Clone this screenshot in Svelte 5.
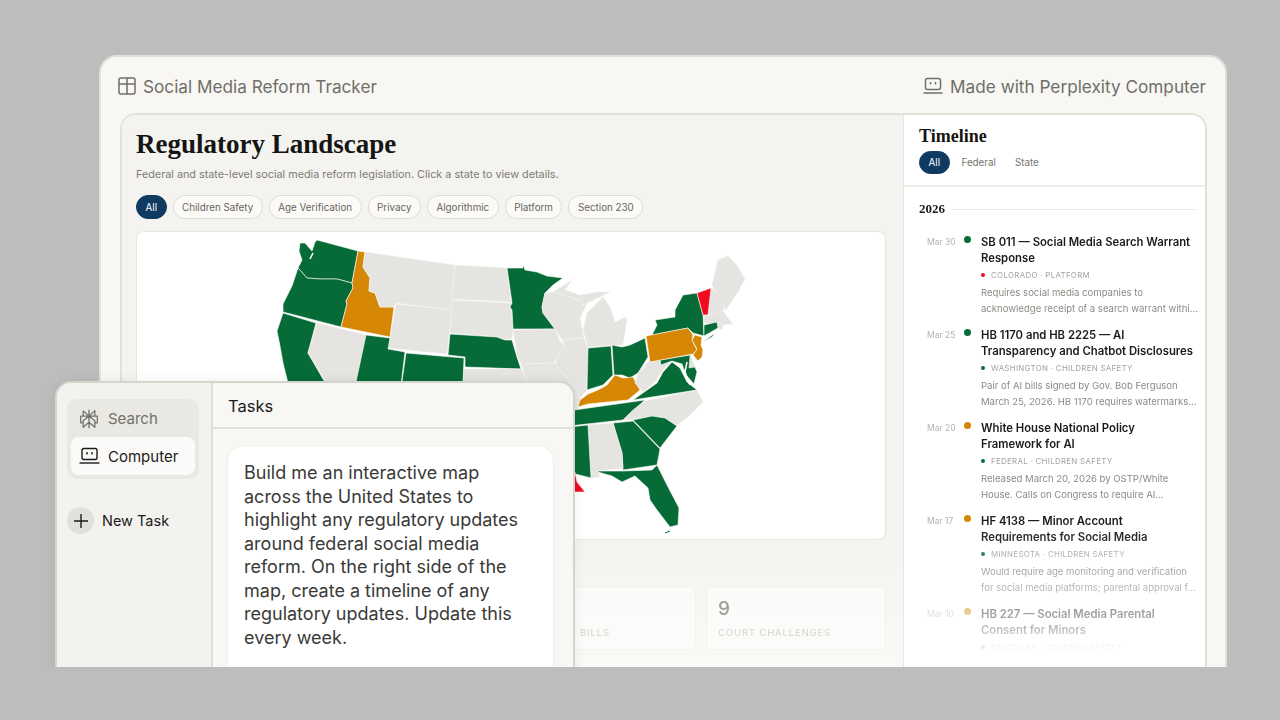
<script>
  const GREEN = '#066b37';
  const ORANGE = '#d58705';
  const RED = '#f20a1f';
  const GRAY = '#e5e4e0';

  // outlines in page-like coordinates, viewBox of the svg is offset to match
  const states = [
    { id: 'WA', fill: GREEN, points: '300,243 305,243 312,251 315,242 317,240 358,251 352,283 337,279 320,279 307,278 298,268 302,260 299,251' },
    { id: 'OR', fill: GREEN, points: '298,268 307,278 320,279 337,279 352,283 353,288 346,301 347,304 341,327 283,312 283,304 292,286' },
    { id: 'CA', fill: GREEN, points: '283,313 316,323 308,353 323,379 345,410 345,470 300,440 287,379 283,363 280,346 277,331' },
    { id: 'ID', fill: ORANGE, points: '358,251 365,252 363,267 370,278 369,291 375,293 380,307 394,307 390,337 341,327 347,304 346,301 353,288 352,283' },
    { id: 'MT', fill: GRAY, points: '365,252 455,265 452,310 396,303 394,307 380,307 375,293 369,291 370,278 363,267' },
    { id: 'ND', fill: GRAY, points: '455,265 507,268 511,302 452,299' },
    { id: 'SD', fill: GRAY, points: '452,300 511,303 513,329 512,338 505,340 497,337 450,333' },
    { id: 'MN', fill: GREEN, points: '507,268 523,268 523,264 525,270 537,272 547,276 563,278 553,285 545,293 542,307 543,313 555,329 513,329 512,310 510,307 512,303' },
    { id: 'WY', fill: GRAY, points: '396,304 452,310 447,354 388,348' },
    { id: 'NV', fill: GRAY, points: '317,323 366,335 350,420 308,353' },
    { id: 'UT', fill: GREEN, points: '366,335 390,338 388,349 405,352 398,410 350,410' },
    { id: 'CO', fill: GREEN, points: '406,353 464,358 462,410 398,410' },
    { id: 'NE', fill: GREEN, points: '450,334 497,337 505,340 512,340 517,357 521,369 465,367 465,357 448,355' },
    { id: 'KS', fill: GRAY, points: '464,369 521,369 526,378 530,412 462,412' },
    { id: 'IA', fill: GRAY, points: '513,330 555,329 559,339 565,347 558,357 554,363 521,364 517,355' },
    { id: 'MO', fill: GRAY, points: '521,364 554,363 575,387 580,398 578,412 530,412 526,378' },
    { id: 'WI', fill: GRAY, points: '545,293 553,292 580,300 583,305 587,303 580,318 584,338 562,340 555,329 543,313 542,307' },
    { id: 'MI-U', fill: GRAY, points: '553,292 572,280 565,290 580,295 597,292 610,292 600,297 587,303 583,305 580,300' },
    { id: 'MI', fill: GRAY, points: '588,347 583,330 587,313 595,305 603,297 610,307 615,322 625,317 627,320 623,345' },
    { id: 'IL', fill: GRAY, points: '562,340 584,338 588,348 589,378 587,390 580,398 575,387 555,364 558,357 565,347' },
    { id: 'IN', fill: GREEN, points: '588,348 611,346 613,375 603,385 587,390' },
    { id: 'OH', fill: GREEN, points: '612,345 622,347 630,345 645,338 648,357 638,373 630,378 622,375 614,375' },
    { id: 'KY', fill: ORANGE, points: '578,407 580,400 588,394 598,390 607,385 615,375 623,378 633,377 636,383 640,390 628,400 588,404' },
    { id: 'TN', fill: GREEN, points: '560,412 645,400 623,420 560,427' },
    { id: 'WV', fill: GRAY, points: '648,362 660,358 661,365 670,362 663,370 655,382 643,392 635,383 638,373' },
    { id: 'VA', fill: GREEN, points: '633,400 640,395 657,383 663,372 672,362 680,368 687,382 697,390' },
    { id: 'MD', fill: GREEN, points: '660,360 690,355 697,372 694,384 686,375 682,364 672,361 661,365' },
    { id: 'DE', fill: GRAY, points: '690,356 695,367 689,368' },
    { id: 'NC', fill: GRAY, points: '623,420 633,410 645,401 697,390 703,402 687,418 677,425 665,418 652,416 633,420' },
    { id: 'SC', fill: GREEN, points: '633,420 652,416 665,418 677,426 660,448' },
    { id: 'GA', fill: GREEN, points: '613,423 633,421 660,449 657,465 623,470 622,453' },
    { id: 'AL', fill: GRAY, points: '588,425 613,423 622,453 623,468 598,471 600,477 591,478' },
    { id: 'MS', fill: GREEN, points: '560,428 588,425 591,478 560,470' },
    { id: 'FL', fill: GREEN, points: '598,471 623,471 652,470 657,465 667,485 679,508 678,525 670,527 657,510 650,500 648,488 635,476 622,482 612,476 598,472' },
    { id: 'LA', fill: RED, points: '560,472 575,472 577,482 585,492 560,492' },
    { id: 'NY', fill: GREEN, points: '697,293 703,315 704,336 693,333 688,328 652,335 657,325 655,320 675,317 675,310 683,295' },
    { id: 'NH', fill: GRAY, points: '711,287 725,300 723,312 708,315' },
    { id: 'VT', fill: RED, points: '697,293 711,288 708,315 703,315' },
    { id: 'ME', fill: GRAY, points: '712,285 718,260 728,256 736,264 745,279 738,292 726,310' },
    { id: 'MA', fill: GRAY, points: '704,316 723,311 728,318 733,324 723,325 704,323' },
    { id: 'RI', fill: GRAY, points: '718,322 723,325 722,330 718,328' },
    { id: 'CT', fill: GREEN, points: '704,325 717,322 718,328 704,336' },
    { id: 'LI', fill: GREEN, points: '703,342 715,333 712,337' },
    { id: 'PA', fill: ORANGE, points: '646,336 688,328 693,335 692,340 697,350 693,354 650,362' },
    { id: 'NJ', fill: ORANGE, points: '695,335 702,337 701,345 703,350 702,357 698,361 693,355 697,349 692,340' }
  ];

  const filters = ['All', 'Children Safety', 'Age Verification', 'Privacy', 'Algorithmic', 'Platform', 'Section 230'];

  const events = [
    { date: 'Mar 30', dot: GREEN, title: 'SB 011 — Social Media Search Warrant Response', tag: RED, meta: 'Colorado · Platform', desc: 'Requires social media companies to acknowledge receipt of a search warrant withi...' },
    { date: 'Mar 25', dot: GREEN, title: 'HB 1170 and HB 2225 — AI Transparency and Chatbot Disclosures', tag: GREEN, meta: 'Washington · Children Safety', desc: 'Pair of AI bills signed by Gov. Bob Ferguson March 25, 2026. HB 1170 requires watermarks...' },
    { date: 'Mar 20', dot: ORANGE, title: 'White House National Policy Framework for AI', tag: GREEN, meta: 'Federal · Children Safety', desc: 'Released March 20, 2026 by OSTP/White House. Calls on Congress to require AI...' },
    { date: 'Mar 17', dot: ORANGE, title: 'HF 4138 — Minor Account Requirements for Social Media', tag: GREEN, meta: 'Minnesota · Children Safety', desc: 'Would require age monitoring and verification for social media platforms; parental approval f...' },
    { date: 'Mar 10', dot: ORANGE, title: 'HB 227 — Social Media Parental Consent for Minors', tag: GREEN, meta: 'Kentucky · Children Safety', desc: '' }
  ];
</script>

<div class="page">
  <div class="stage">
    <div class="window">
      <header class="bar">
        <div class="bar-item">
          <svg width="18" height="18" viewBox="0 0 18 18" fill="none" stroke="currentColor" stroke-width="1.5">
            <rect x="1" y="1" width="16" height="16" rx="2" />
            <path d="M1 7h16M9 1v16" />
          </svg>
          Social Media Reform Tracker
        </div>
        <div class="bar-item">
          <svg width="20" height="18" viewBox="0 0 20 18" fill="none" stroke="currentColor" stroke-width="1.5">
            <rect x="2.5" y="1.5" width="15" height="11" rx="2" />
            <path d="M7.5 5v2.5M12.5 5v2.5" />
            <path d="M0.5 16h19" />
          </svg>
          Made with Perplexity Computer
        </div>
      </header>

      <div class="panel">
        <main class="main">
          <h1>Regulatory Landscape</h1>
          <p class="sub">Federal and state-level social media reform legislation. Click a state to view details.</p>
          <div class="chips">
            {#each filters as f, i}
              <span class="chip" class:on={i === 0}>{f}</span>
            {/each}
          </div>
          <div class="map">
            <svg width="748" height="307" viewBox="137 232 748 307">
              {#each states as s (s.id)}
                <polygon points={s.points} fill={s.fill} stroke={s.fill === GRAY ? '#f3f2ef' : '#fff'} stroke-width="0.6" stroke-linejoin="round" />
              {/each}
              <path d="M313 253l-3 6M687 362l-2 10 5 13" fill="none" stroke="#fff" stroke-width="1.5" />
              <path d="M665 533l5-2" fill="none" stroke={GREEN} stroke-width="1" />
            </svg>
          </div>
          <div class="stats">
            <div class="stat"></div>
            <div class="stat"></div>
            <div class="stat"><span class="bills">Bills</span></div>
            <div class="stat"><b>9</b><span>Court challenges</span></div>
          </div>
        </main>

        <aside class="side">
          <div class="side-head">
            <h2>Timeline</h2>
            <div class="tabs">
              <span class="chip on">All</span>
              <span class="tab">Federal</span>
              <span class="tab">State</span>
            </div>
          </div>
          <div class="side-body">
            <div class="year"><b>2026</b><i></i></div>
            {#each events as e}
              <article class="event">
                <time>{e.date}</time>
                <span class="dot" style="background:{e.dot}"></span>
                <div>
                  <h3>{e.title}</h3>
                  <div class="meta"><span class="tag" style="background:{e.tag}"></span>{e.meta}</div>
                  {#if e.desc}<p>{e.desc}</p>{/if}
                </div>
              </article>
            {/each}
          </div>
        </aside>
      </div>
    </div>

    <section class="tasks">
      <nav class="nav">
        <div class="switch">
          <div class="switch-item search">
            <svg width="20" height="22" viewBox="0 0 24 24" fill="none" stroke="currentColor" stroke-width="1.5" stroke-linejoin="round">
              <path d="M12 1v22M5 2l7 6.5L19 2v6.5M5 2v6.5M2 8.5h20v8h-3M2 8.5v8h3M5 22v-8l7-5.5 7 5.5v8l-7-6z" />
            </svg>
            Search
          </div>
          <div class="switch-item active">
            <svg width="21" height="18" viewBox="0 0 20 18" fill="none" stroke="currentColor" stroke-width="1.4">
              <rect x="2.5" y="1.5" width="15" height="11" rx="2" />
              <path d="M7.5 5v2.5M12.5 5v2.5" />
              <path d="M0 16h20" />
            </svg>
            Computer
          </div>
        </div>
        <div class="new">
          <span class="plus">
            <svg width="16" height="16" viewBox="0 0 16 16" fill="none" stroke="currentColor" stroke-width="1.4"><path d="M8 1v14M1 8h14" /></svg>
          </span>
          New Task
        </div>
      </nav>
      <div class="content">
        <div class="content-head">Tasks</div>
        <div class="prompt">
          Build me an interactive map across the United States to highlight any regulatory updates around federal social media reform. On the right side of the map, create a timeline of any regulatory updates. Update this every week.
        </div>
      </div>
    </section>
  </div>
</div>

<style>
  :global(body) {
    margin: 0;
    background: #bdbdbd;
  }

  .page {
    height: 720px;
    font-family: Inter, "Liberation Sans", sans-serif;
    color: #1b1b19;
  }

  .stage {
    position: relative;
    height: 667px;
    overflow: hidden;
    box-sizing: border-box;
    padding: 55px 53px 0 99px;
  }

  .window {
    height: 680px;
    box-sizing: border-box;
    background: #f8f7f3;
    border: 2px solid #e2e1d9;
    border-radius: 18px;
    padding: 0 18px 0 19px;
  }

  .bar {
    display: flex;
    justify-content: space-between;
    align-items: center;
    box-sizing: border-box;
    height: 56px;
    padding-top: 2px;
    margin: 0 1px 0 -2px;
    color: #6f6f69;
    font-size: 17.2px;
  }

  .bar-item {
    display: flex;
    align-items: center;
    gap: 7px;
  }

  .panel {
    display: flex;
    height: 620px;
    border: 2px solid #e2e1d9;
    border-bottom: 0;
    border-radius: 16px 16px 0 0;
    overflow: hidden;
  }

  .main {
    flex: 1;
    min-width: 0;
    box-sizing: border-box;
    padding: 11px 17px 0 14px;
    background: linear-gradient(#f4f3ef 420px, #faf9f6 540px);
  }

  h1 {
    margin: 0;
    font: 700 27px/36px "Liberation Serif", serif;
    color: #151513;
  }

  .sub {
    margin: 5px 0 0;
    font-size: 10.8px;
    line-height: 16px;
    color: #7c7c76;
  }

  .chips {
    display: flex;
    gap: 6px;
    margin-top: 12px;
  }

  .chip {
    display: inline-flex;
    align-items: center;
    box-sizing: border-box;
    height: 24px;
    padding: 0 8.5px;
    border: 1px solid #dcdbd4;
    border-radius: 12px;
    background: #fbfaf7;
    font-size: 9.8px;
    color: #65655f;
  }

  .chip.on {
    background: #0f3a62;
    border-color: #0f3a62;
    color: #fff;
  }

  .map {
    margin-top: 12px;
    height: 309px;
    box-sizing: border-box;
    background: #fff;
    border: 1px solid #e6e5de;
    border-radius: 8px;
    overflow: hidden;
  }

  .map svg {
    display: block;
  }

  .stats {
    display: grid;
    grid-template-columns: repeat(4, 1fr);
    gap: 10px;
    margin-top: 46px;
    opacity: 0.55;
  }

  .stat {
    height: 64px;
    box-sizing: border-box;
    padding: 10px 11px;
    background: #fff;
    border: 1px solid #efeee9;
    border-radius: 6px;
  }

  .stat b {
    display: block;
    font-size: 19px;
    line-height: 24px;
    font-weight: 500;
    color: #55554f;
  }

  .stat span {
    display: block;
    margin-top: 6px;
    font-size: 9.6px;
    letter-spacing: 0.8px;
    text-transform: uppercase;
    color: #b5b5b0;
  }

  .stat .bills {
    margin-top: 30px;
    padding-left: 52px;
  }

  .side {
    width: 302px;
    flex: none;
    box-sizing: border-box;
    background: #fff;
    border-left: 1px solid #e8e7e1;
  }

  .side-head {
    height: 72px;
    padding: 9px 15px 0;
    box-sizing: border-box;
    border-bottom: 2px solid #eeede8;
  }

  h2 {
    margin: 0;
    font: 700 18px/24px "Liberation Serif", serif;
    color: #151513;
  }

  .tabs {
    display: flex;
    align-items: center;
    gap: 19px;
    margin-top: 3px;
  }

  .tabs .chip {
    height: 23px;
    margin-right: -7px;
  }

  .tab {
    font-size: 9.8px;
    color: #74746e;
  }

  .side-body {
    padding: 14px 10px 0 15px;
    mask-image: linear-gradient(#000 335px, rgba(0, 0, 0, 0.75) 385px, rgba(0, 0, 0, 0.4) 430px, rgba(0, 0, 0, 0.12) 460px, transparent 480px);
    height: 480px;
    box-sizing: border-box;
  }

  .year {
    display: flex;
    align-items: center;
    gap: 7px;
    margin-bottom: 17px;
  }

  .year b {
    font: 700 13px/16px "Liberation Serif", serif;
  }

  .year i {
    flex: 1;
    height: 1px;
    background: #e8e7e1;
  }

  .event {
    display: grid;
    grid-template-columns: 37px 17px 1fr;
    margin-left: 8px;
    height: 93px;
  }

  time {
    font-size: 8.5px;
    line-height: 16px;
    color: #b3b3ad;
  }

  .dot {
    width: 7px;
    height: 7px;
    margin: 2px 0 0 0;
    border-radius: 50%;
  }

  h3 {
    margin: 0;
    font-size: 11.3px;
    line-height: 16px;
    font-weight: 600;
    color: #1b1b19;
  }

  .meta {
    display: flex;
    align-items: center;
    gap: 6px;
    margin-top: 2px;
    font-size: 7.9px;
    line-height: 14px;
    letter-spacing: 0.3px;
    text-transform: uppercase;
    color: #a3a39d;
  }

  .tag {
    width: 4px;
    height: 4px;
    border-radius: 50%;
  }

  p {
    margin: 3px -4px 0 0;
    font-size: 9.55px;
    line-height: 15.5px;
    color: #8b8b85;
  }

  .tasks {
    position: absolute;
    left: 55px;
    top: 381px;
    width: 520px;
    height: 310px;
    display: flex;
    box-sizing: border-box;
    background: #f4f2ee;
    border: 2px solid #d5d4cd;
    border-radius: 16px;
    box-shadow: 0 0 12px rgba(0, 0, 0, 0.07);
  }

  .nav {
    width: 156px;
    flex: none;
    box-sizing: border-box;
    padding: 16px 12px 0 10px;
    border-right: 2px solid #e0dfd8;
  }

  .switch {
    padding: 4px;
    background: #e9e8e3;
    border-radius: 10px;
  }

  .switch-item {
    display: flex;
    align-items: center;
    gap: 8px;
    height: 38px;
    padding: 0 8px;
    font-size: 15px;
    color: #71716b;
  }

  .switch-item.search {
    height: 34px;
    padding-bottom: 3px;
    box-sizing: border-box;
    gap: 9px;
  }

  .switch-item.active {
    background: #fbfaf8;
    border-radius: 8px;
    color: #1b1b19;
  }

  .new {
    display: flex;
    align-items: center;
    gap: 8px;
    margin-top: 28px;
    font-size: 14.5px;
    color: #1b1b19;
  }

  .plus {
    display: flex;
    align-items: center;
    justify-content: center;
    width: 27px;
    height: 27px;
    border-radius: 50%;
    background: #e1e0da;
  }

  .content {
    flex: 1;
    min-width: 0;
    background: #f8f7f3;
    border-radius: 0 14px 0 0;
  }

  .content-head {
    height: 46px;
    box-sizing: border-box;
    padding-top: 1px;
    display: flex;
    align-items: center;
    padding-left: 15px;
    font-size: 16.5px;
    border-bottom: 2px solid #e0dfd8;
  }

  .prompt {
    margin: 16px 19px 0 14px;
    padding: 15px 20px 20px 16px;
    background: #fff;
    border: 1px solid #efeee8;
    border-radius: 16px;
    font-size: 18px;
    line-height: 23.5px;
    color: #3a3a37;
    height: 240px;
  }
</style>
